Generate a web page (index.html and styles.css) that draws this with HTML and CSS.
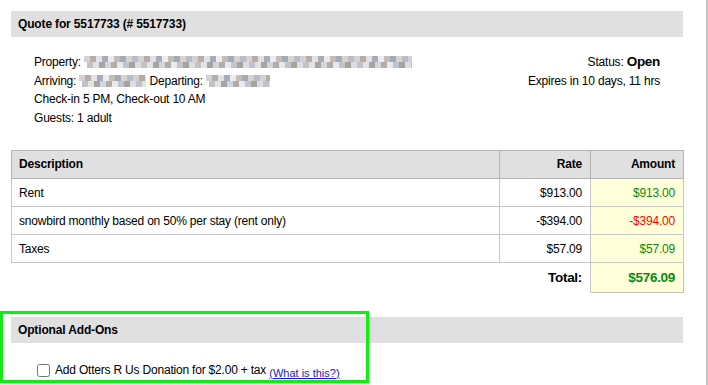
FILE: index.html
```html
<!DOCTYPE html>
<html lang="en">
<head>
<meta charset="utf-8">
<title>Quote for 5517733</title>
<link rel="stylesheet" href="styles.css">
</head>
<body>
<div class="page">
  <div class="content">
    <div class="section-bar">Quote for 5517733 (# 5517733)</div>

    <div class="info">
      <div class="info-left">
        <div class="line">Property: <span class="redact r-prop"></span></div>
        <div class="line">Arriving: <span class="redact r-arr"></span> Departing: <span class="redact r-dep"></span></div>
        <div class="line">Check-in 5 PM, Check-out 10 AM</div>
        <div class="line">Guests: 1 adult</div>
      </div>
      <div class="info-right">
        <div class="line">Status: <span class="status">Open</span></div>
        <div class="line">Expires in 10 days, 11 hrs</div>
      </div>
    </div>

    <table class="quote">
      <colgroup>
        <col class="c-desc">
        <col class="c-rate">
        <col class="c-amt">
      </colgroup>
      <thead>
        <tr>
          <th class="desc">Description</th>
          <th class="num">Rate</th>
          <th class="num">Amount</th>
        </tr>
      </thead>
      <tbody>
        <tr>
          <td class="desc">Rent</td>
          <td class="num rate">$913.00</td>
          <td class="num amt pos">$913.00</td>
        </tr>
        <tr>
          <td class="desc">snowbird monthly based on 50% per stay (rent only)</td>
          <td class="num rate">-$394.00</td>
          <td class="num amt neg">-$394.00</td>
        </tr>
        <tr>
          <td class="desc">Taxes</td>
          <td class="num rate">$57.09</td>
          <td class="num amt pos">$57.09</td>
        </tr>
        <tr class="total-row">
          <td class="total-label" colspan="2">Total:</td>
          <td class="num total-amt">$576.09</td>
        </tr>
      </tbody>
    </table>

    <div class="section-bar addons-bar">Optional Add-Ons</div>
    <div class="addon">
      <label class="addon-label"><input type="checkbox" class="addon-check"> Add Otters R Us Donation for $2.00 + tax</label>
      <a href="#" class="help-link">(What is this?)</a>
    </div>
  </div>
  <div class="highlight"></div>
</div>
</body>
</html>
```
FILE: styles.css
```css
html, body {
  margin: 0;
  padding: 0;
  background: #ffffff;
}

body {
  font-family: "Liberation Sans", Arial, sans-serif;
  font-size: 12px;
  color: #000000;
}

.page {
  position: relative;
  width: 708px;
  min-height: 385px;
  box-sizing: border-box;
  border-right: 2px solid #c4c4c4;
}

.content {
  width: 672px;
  padding: 11px 0 0 11px;
}

.section-bar {
  background: #e0e0e0;
  height: 26px;
  line-height: 26px;
  padding-left: 7px;
  font-weight: bold;
  letter-spacing: -0.15px;
}

.info {
  display: flex;
  justify-content: space-between;
  padding: 16px 23px 0 23px;
  line-height: 18.7px;
  letter-spacing: -0.2px;
}

.info-right {
  text-align: right;
}

.status {
  font-weight: bold;
  font-size: 13.5px;
  letter-spacing: -0.3px;
}

.redact {
  display: inline-block;
  height: 12px;
  vertical-align: -2px;
  background-image:
    repeating-linear-gradient(90deg,
      #d3d1d4 0 6px, #b7aca6 6px 12px, #dfe2e8 12px 18px,
      #a9abb6 18px 24px, #ecebee 24px 30px, #c4bcb6 30px 36px,
      #a4a9b6 36px 42px, #d8d3cf 42px 48px, #b9bcc6 48px 54px),
    repeating-linear-gradient(90deg,
      #bfc2cb 0 6px, #e4e1de 6px 12px, #a7a2a4 12px 18px,
      #d1d5dd 18px 24px, #b4aca8 24px 30px, #e8e9ed 30px 36px,
      #c0c4cf 36px 42px, #a9a39e 42px 48px, #dcdde2 48px 54px);
  background-size: 100% 6px, 100% 6px;
  background-position: 0 0, 3px 6px;
  background-repeat: no-repeat, no-repeat;
}

.r-prop { width: 328px; }
.r-arr { width: 67px; }
.r-dep { width: 64px; }

.quote {
  width: 672px;
  margin-top: 22px;
  border-collapse: collapse;
  table-layout: fixed;
  letter-spacing: -0.2px;
}

.c-desc { width: 488px; }
.c-rate { width: 91px; }
.c-amt { width: 93px; }

.quote th,
.quote td {
  padding: 6px 8px 6px 7px;
  line-height: 15px;
  height: 15px;
}

.quote th {
  background: #e0e0e0;
  border: 1px solid #b4b4b4;
  font-weight: bold;
}

.quote td {
  border: 1px solid #c6c6c6;
}

.quote .desc {
  text-align: left;
}

.quote td.desc {
  padding-top: 7px;
  padding-bottom: 5px;
}

.quote .num {
  text-align: right;
}

.quote td.rate,
.quote td.amt {
  border-left: 1px dashed #c6c6c6;
  padding-top: 7px;
  padding-bottom: 5px;
}

.quote td.amt {
  background: #ffffd9;
}

.pos { color: #0a8a0a; }
.neg { color: #ff0000; }

.total-row td {
  padding-top: 7px;
  padding-bottom: 7px;
}

.quote td.total-label {
  border-left: none;
  border-bottom: none;
  text-align: right;
  font-weight: bold;
  font-size: 13.5px;
  letter-spacing: -0.3px;
}

.quote td.total-amt {
  border: 1px solid #c0c0c0;
  background: #ffffd9;
  color: #0a8a0a;
  font-weight: bold;
  font-size: 13.5px;
  letter-spacing: -0.3px;
}

.addons-bar {
  margin-top: 24px;
}

.addon {
  padding: 20px 0 0 26px;
  line-height: 15px;
  letter-spacing: -0.2px;
}

.addon-label {
  display: inline-flex;
  align-items: center;
}

.addon-check {
  margin: 0 5px 0 0;
  width: 13px;
  height: 13px;
}

.help-link {
  font-size: 11px;
  color: #1a1acc;
  text-decoration: underline;
  letter-spacing: 0;
}

.highlight {
  position: absolute;
  left: 0;
  top: 311px;
  width: 369px;
  height: 72px;
  box-sizing: border-box;
  border: 3px solid #16ea16;
  box-shadow: 1px 1px 2px rgba(0, 0, 0, 0.25);
  pointer-events: none;
}
```
